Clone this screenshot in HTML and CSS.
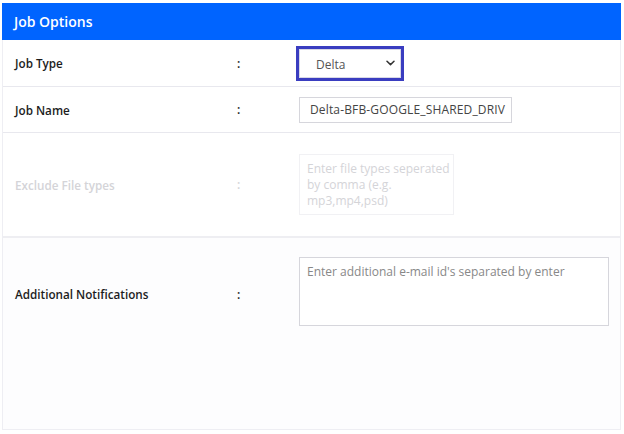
FILE: index.html
```html
<!DOCTYPE html>
<html>
<head>
<meta charset="utf-8">
<link rel="stylesheet" href="styles.css">
</head>
<body>
<div class="card">
  <div class="header">Job Options</div>
  <div class="row row-type">
    <div class="label">Job Type</div>
    <div class="colon">:</div>
    <div class="field">
      <div class="select">
        <span>Delta</span>
        <svg width="9" height="6" viewBox="0 0 9 6"><path d="M1 1.2 L4.5 4.6 L8 1.2" fill="none" stroke="#333" stroke-width="1.5" stroke-linecap="round" stroke-linejoin="round"/></svg>
      </div>
    </div>
  </div>
  <div class="row row-name">
    <div class="label">Job Name</div>
    <div class="colon">:</div>
    <div class="field">
      <div class="input">Delta-BFB-GOOGLE_SHARED_DRIV</div>
    </div>
  </div>
  <div class="row row-exclude disabled">
    <div class="label">Exclude File types</div>
    <div class="colon">:</div>
    <div class="field">
      <div class="textarea small">Enter file types seperated by comma (e.g. mp3,mp4,psd)</div>
    </div>
  </div>
  <div class="row row-notify">
    <div class="label">Additional Notifications</div>
    <div class="colon">:</div>
    <div class="field">
      <div class="textarea large">Enter additional e-mail id's separated by enter</div>
    </div>
  </div>
</div>
</body>
</html>
```
FILE: styles.css
```css
html, body {
  margin: 0;
  padding: 0;
  background: #ffffff;
  font-family: "Open Sans", "Noto Sans", sans-serif;
}
.card {
  margin: 3px 0 0 2px;
  width: 619px;
  height: 427px;
  box-sizing: border-box;
  border: 1px solid #eeeef3;
  border-top: none;
  display: flex;
  flex-direction: column;
  background: #fff;
}
.header {
  background: #0064ff;
  color: #ffffff;
  height: 37px;
  margin: 0 -1px;
  box-sizing: border-box;
  padding-left: 12px;
  display: flex;
  align-items: center;
  font-size: 14px;
  font-weight: 600;
  flex: none;
}
.row {
  box-sizing: border-box;
  display: grid;
  grid-template-columns: 234px 62px 1fr;
  align-items: center;
  border-bottom: 1px solid #e8e8ee;
  flex: none;
}
.label {
  padding-left: 12px;
  font-size: 11.7px;
  font-weight: 600;
  color: #1c1c1c;
}
.colon {
  font-size: 12px;
  font-weight: 600;
  color: #1c1c1c;
}
.row-type { height: 47px; }
.row-name { height: 46px; }
.row-exclude { height: 105px; border-bottom: 2px solid #eeeef2; }
.row-notify { flex: 1; align-items: start; border-bottom: none; background: #fdfdfe; }
.row-notify .label, .row-notify .colon { margin-top: 48px; }
.disabled .label, .disabled .colon { color: #d4d4d8; }
.select {
  margin-left: -3px;
  width: 108px;
  height: 35px;
  box-sizing: border-box;
  border: 3px solid #3a3dc0;
  outline: 1px solid #d8d8e6;
  outline-offset: -4px;
  display: flex;
  align-items: center;
  justify-content: space-between;
  padding: 2px 6px 0 17px;
  font-size: 12px;
  color: #555;
}
.select svg { margin-top: -3px; }
.input {
  width: 213px;
  height: 26px;
  box-sizing: border-box;
  border: 1px solid #d6d6dc;
  display: flex;
  align-items: center;
  padding-left: 10px;
  font-size: 12px;
  letter-spacing: 0.15px;
  color: #444;
  white-space: nowrap;
  overflow: hidden;
  background: #fff;
}
.textarea {
  box-sizing: border-box;
  font-size: 12px;
  line-height: 16px;
  background: #fff;
}
.textarea.small {
  width: 155px;
  height: 61px;
  border: 1px solid #f1f1f4;
  padding: 6px 0 0 7px;
  color: #d4d4d8;
}
.textarea.large {
  margin-top: 19px;
  width: 310px;
  height: 69px;
  border: 1px solid #d6d6dc;
  padding: 6px 6px 0 7px;
  color: #888;
}
```
